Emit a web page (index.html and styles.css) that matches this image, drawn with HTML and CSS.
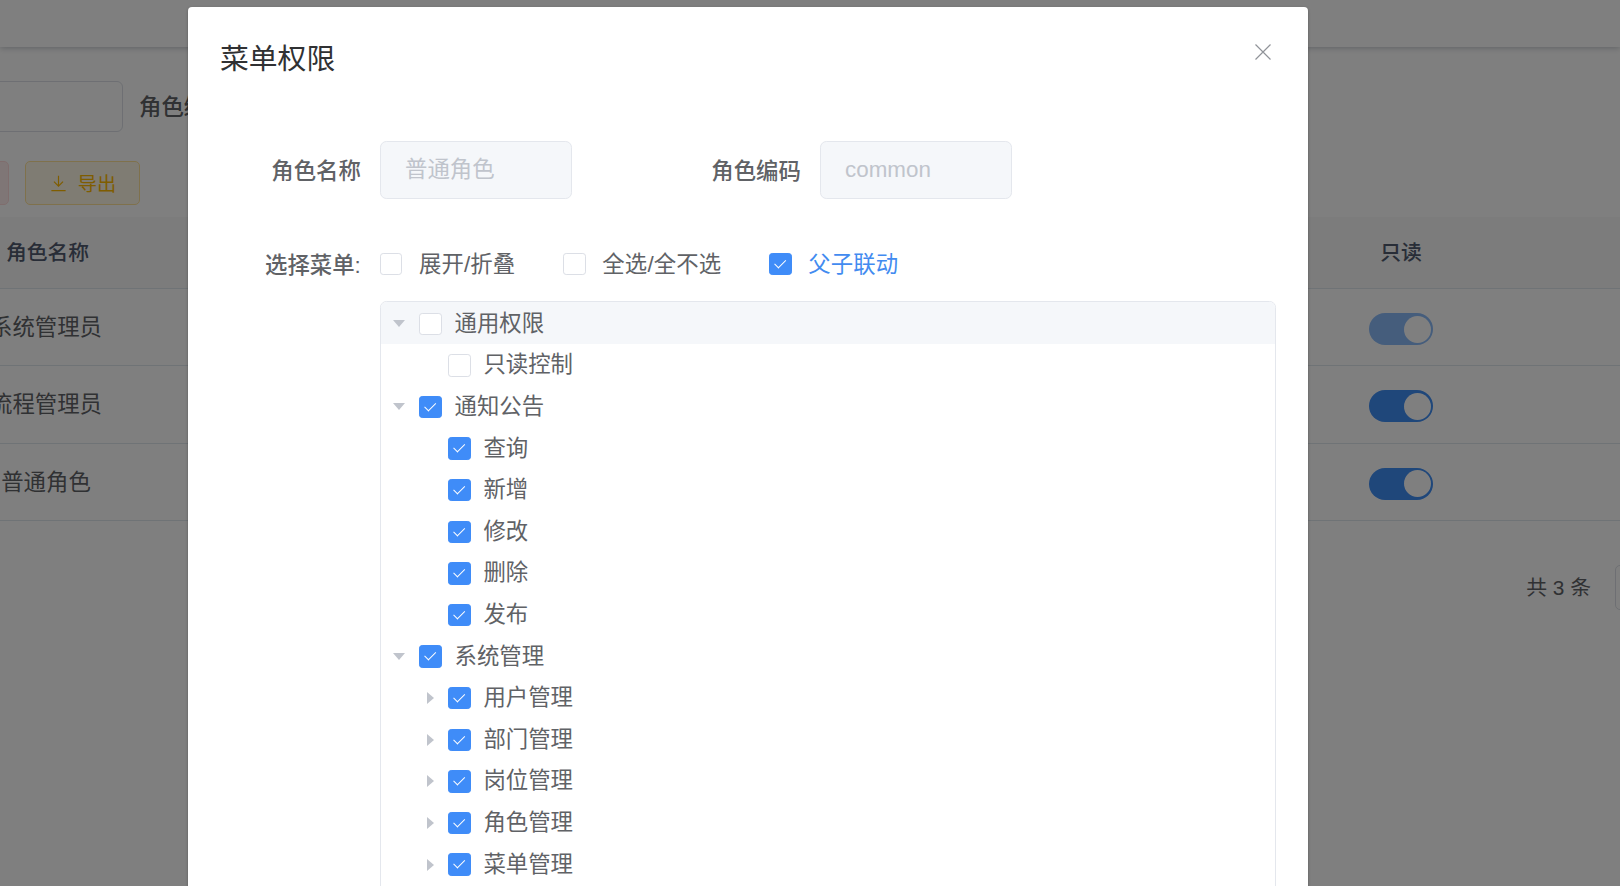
FILE: index.html
```html
<!DOCTYPE html>
<html lang="zh-CN">
<head>
<meta charset="utf-8">
<title>菜单权限</title>
<link rel="stylesheet" href="styles.css">
</head>
<body>
<div class="page">
  <header class="navbar"></header>
  <main class="content">
    <div class="search">
      <div class="search-input"></div>
      <span class="search-label">角色编码</span>
    </div>
    <div class="toolbar">
      <div class="btn btn-danger"></div>
      <div class="btn btn-warning">
        <svg class="btn-icon" viewBox="0 0 16 16"><path d="M8 1.5v8.5M4.2 6.4L8 10.2l3.8-3.8M2 14h12" fill="none" stroke="currentColor" stroke-width="1"/></svg>
        <span>导出</span>
      </div>
    </div>
    <div class="table">
      <div class="tr th"><span class="c1">角色名称</span><span></span><span class="c3">只读</span></div>
      <div class="tr"><span class="c1">系统管理员</span><span></span><span class="c3 c3-switch"><i class="switch switch-disabled"></i></span></div>
      <div class="tr"><span class="c1">流程管理员</span><span></span><span class="c3 c3-switch"><i class="switch"></i></span></div>
      <div class="tr"><span class="c1">普通角色</span><span></span><span class="c3 c3-switch"><i class="switch"></i></span></div>
    </div>
    <div class="pagination"><span>共 3 条</span><div class="page-size"></div></div>
  </main>
  <div class="overlay"></div>
  <section class="dialog">
    <h2 class="dialog-title">菜单权限</h2>
    <svg class="dialog-close" viewBox="0 0 16 16"><path d="M0.5 0.5l15 15M15.5 0.5l-15 15" fill="none" stroke="currentColor" stroke-width="1.2"/></svg>
    <div class="form-row">
      <label class="form-label">角色名称</label>
      <div class="field">普通角色</div>
      <label class="form-label form-label-second">角色编码</label>
      <div class="field">common</div>
    </div>
    <div class="menu-row">
      <label class="form-label">选择菜单:</label>
      <div class="options">
        <span class="check"><i class="box"></i><span class="check-text">展开/折叠</span></span>
        <span class="check"><i class="box"></i><span class="check-text">全选/全不选</span></span>
        <span class="check check-active"><i class="box box-on"></i><span class="check-text">父子联动</span></span>
      </div>
    </div>
    <div class="tree">
      <div class="node node-current"><i class="caret caret-down"></i><i class="box"></i><span class="node-text">通用权限</span></div>
      <div class="node node-child"><i class="caret"></i><i class="box"></i><span class="node-text">只读控制</span></div>
      <div class="node"><i class="caret caret-down"></i><i class="box box-on"></i><span class="node-text">通知公告</span></div>
      <div class="node node-child"><i class="caret"></i><i class="box box-on"></i><span class="node-text">查询</span></div>
      <div class="node node-child"><i class="caret"></i><i class="box box-on"></i><span class="node-text">新增</span></div>
      <div class="node node-child"><i class="caret"></i><i class="box box-on"></i><span class="node-text">修改</span></div>
      <div class="node node-child"><i class="caret"></i><i class="box box-on"></i><span class="node-text">删除</span></div>
      <div class="node node-child"><i class="caret"></i><i class="box box-on"></i><span class="node-text">发布</span></div>
      <div class="node"><i class="caret caret-down"></i><i class="box box-on"></i><span class="node-text">系统管理</span></div>
      <div class="node node-child"><i class="caret caret-right"></i><i class="box box-on"></i><span class="node-text">用户管理</span></div>
      <div class="node node-child"><i class="caret caret-right"></i><i class="box box-on"></i><span class="node-text">部门管理</span></div>
      <div class="node node-child"><i class="caret caret-right"></i><i class="box box-on"></i><span class="node-text">岗位管理</span></div>
      <div class="node node-child"><i class="caret caret-right"></i><i class="box box-on"></i><span class="node-text">角色管理</span></div>
      <div class="node node-child"><i class="caret caret-right"></i><i class="box box-on"></i><span class="node-text">菜单管理</span></div>
    </div>
  </section>
</div>
</body>
</html>
```
FILE: styles.css
```css
* { box-sizing: border-box; }
html, body { margin: 0; padding: 0; height: 100%; overflow: hidden; }
body {
  font-family: "Liberation Sans", "Noto Sans CJK SC", sans-serif;
  font-size: 22.4px;
  color: #606266;
  background: #fff;
}
.page { position: relative; width: 1620px; height: 886px; overflow: hidden; background: #fff; }

.navbar { height: 47px; background: #fff; box-shadow: 0 1px 6px rgba(0, 21, 41, .25); position: relative; }
.content { margin-left: -60px; width: 1680px; }

.search { display: flex; align-items: center; gap: 16px; padding-top: 34px; }
.search-input { width: 183px; height: 51px; border: 1.6px solid #dcdfe6; border-radius: 6px; background: #fff; }
.search-label { font-weight: 500; color: #606266; padding-bottom: 4px; }

.toolbar { display: flex; gap: 16px; margin-top: 29px; margin-bottom: 12px; }
.btn { height: 44px; border-radius: 5px; border: 1.6px solid; display: flex; align-items: center; justify-content: center; gap: 10px; font-size: 19.2px; }
.btn-danger { width: 69px; background: #ffeded; border-color: #ffdbdb; }
.btn-warning { width: 115px; background: #fff8e6; border-color: #ffe399; color: #ffba00; }
.btn-icon { width: 19px; height: 19px; }

.tr { display: grid; grid-template-columns: 212px 1fr 200px 119px; align-items: center; height: 77.3px; border-bottom: 1.6px solid #dfe6ec; background: #fff; }
.th { height: 72px; background: #f8f8f9; color: #515a6e; font-weight: 500; font-size: 20.8px; }
.tr > .c1 { text-align: center; padding-bottom: 4px; }
.th > .c1 { padding-left: 3px; }
.tr > .c3 { grid-column: 3; text-align: center; display: flex; justify-content: center; padding-bottom: 4px; }
.tr > .c3-switch { padding-top: 4px; padding-bottom: 0; }
.switch { display: block; width: 64px; height: 32px; border-radius: 16px; background: #3f8ef5; position: relative; }
.switch::after { content: ""; position: absolute; right: 2px; top: 2.5px; width: 27px; height: 27px; border-radius: 50%; background: #fff; }
.switch-disabled { opacity: .6; }

.pagination { display: flex; align-items: center; justify-content: flex-end; gap: 24px; margin-top: 44px; margin-right: -100px; font-size: 20.8px; }
.pagination span { padding-bottom: 3px; }
.page-size { width: 105px; height: 45px; border: 1.6px solid #dcdfe6; border-radius: 5px; }

.overlay { position: absolute; inset: 0; background: rgba(0, 0, 0, .5); }

.dialog {
  position: absolute; left: 188px; top: 7px; width: 1120px; height: 940px;
  background: #fff; border-radius: 4px; box-shadow: 0 1px 3px rgba(0, 0, 0, .3);
  padding: 33px 32px 32px;
}
.dialog-title { margin: 0; font-size: 28.8px; line-height: 38.4px; font-weight: 400; color: #303133; }
.dialog-close { position: absolute; right: 37px; top: 37px; width: 16px; height: 16px; color: #909399; }

.form-row { display: flex; align-items: center; margin-top: 63px; }
.form-label { width: 160px; padding: 0 19.2px 3px 0; text-align: right; font-weight: 500; color: #606266; flex: none; }
.form-label-second { margin-left: 88px; }
.field {
  width: 192px; height: 58px; padding-left: 24px; line-height: 55px; flex: none;
  background: #f5f7fa; border: 1.6px solid #e4e7ed; border-radius: 6.4px; color: #c0c4cc;
}

.menu-row { display: flex; align-items: center; height: 41.6px; margin-top: 44px; }
.options { display: flex; gap: 48px; }
.check { display: flex; align-items: center; gap: 16.6px; }
.check-text { letter-spacing: .12px; padding-bottom: 4px; }
.check-active { color: #428bf0; }

.box { display: block; position: relative; width: 22.4px; height: 22.4px; flex: none; border: 1.6px solid #dcdfe6; border-radius: 3.2px; background: #fff; }
.box-on { background: #3f8cf8; border-color: #3f8cf8; }
.box-on::after {
  content: ""; position: absolute; left: 6.6px; top: 3px; width: 5.4px; height: 10.4px;
  border: solid #fff; border-width: 0 1.1px 1.1px 0; transform: rotate(45deg);
}

.tree { margin: 16px 0 0 160px; width: 896px; height: 700px; border: 1.6px solid #e4e7ed; border-radius: 6.4px; overflow: hidden; }
.node { display: flex; align-items: center; height: 41.6px; }
.node-current { background: #f5f7fa; }
.node-child { padding-left: 28.8px; }
.node .box { margin-top: 2px; }
.node-text { margin-left: 12.8px; padding-bottom: 4px; }
.caret { display: flex; align-items: center; justify-content: center; width: 38.4px; height: 100%; flex: none; padding-top: 2px; }
.caret-down { padding-right: 2px; }
.caret-down::before { content: ""; border-style: solid; border-width: 7px 6px 0 6px; border-color: #c0c4cc transparent transparent transparent; }
.caret-right { padding-left: 3px; }
.caret-right::before { content: ""; border-style: solid; border-width: 6.5px 0 6.5px 7.5px; border-color: transparent transparent transparent #c0c4cc; }
```
